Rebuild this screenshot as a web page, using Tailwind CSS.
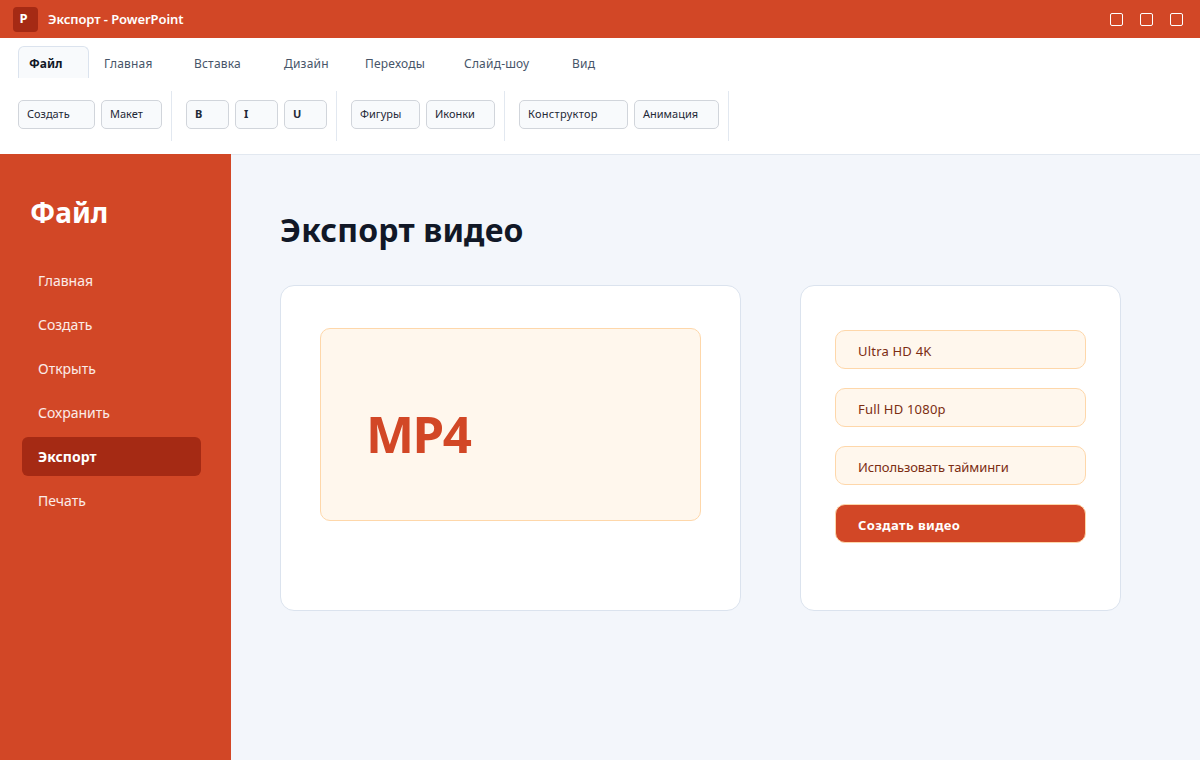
<!DOCTYPE html>
<html lang="ru">
<head>
<meta charset="utf-8">
<script src="https://cdn.jsdelivr.net/npm/@tailwindcss/browser@4"></script>
</head>
<body class="m-0 h-[760px] w-[1200px] overflow-hidden font-['Noto_Sans',sans-serif] bg-[#f3f6fb]">
<div class="flex h-[38px] items-center justify-between bg-[#d24726] pl-[13px] pr-[17px]">
  <div class="flex items-center gap-[10px]">
    <div class="flex h-[25px] w-[25px] items-center justify-center rounded-[4px] bg-[#a52a14] pb-[1px] pr-[4px] text-[13px] font-bold text-white">P</div>
    <span class="pt-[1px] text-[13px] font-semibold tracking-[-0.08px] text-white">Экспорт - PowerPoint</span>
  </div>
  <div class="flex gap-[17px]">
    <div class="h-[13px] w-[13px] rounded-[2px] border border-white"></div>
    <div class="h-[13px] w-[13px] rounded-[2px] border border-white"></div>
    <div class="h-[13px] w-[13px] rounded-[2px] border border-white"></div>
  </div>
</div>
<div class="h-[116px] bg-white px-[18px] pt-[8px]">
  <div class="flex h-[32px] text-[12px] tracking-[0.2px] text-[#475569]">
    <div class="flex w-[71px] items-center rounded-t-[6px] border border-b-0 border-[#dbe3ee] bg-[#f8fafc] pl-[10px] pt-[3px] font-bold tracking-normal text-[#111827]">Файл</div>
    <div class="ml-[15px] flex w-[90px] items-center pt-[3px]">Главная</div>
    <div class="flex w-[90px] items-center pt-[3px]">Вставка</div>
    <div class="flex w-[81px] items-center pt-[3px]">Дизайн</div>
    <div class="flex w-[99px] items-center pt-[3px]">Переходы</div>
    <div class="flex w-[108px] items-center pt-[3px]">Слайд-шоу</div>
    <div class="flex items-center pt-[3px]">Вид</div>
  </div>
  <div class="mt-[13px] flex h-[50px] items-start text-[11px] text-[#1f2937]">
    <div class="flex h-[50px] items-start gap-[6px] border-r border-[#e2e8f0] pr-[9px] pt-[9px]">
      <div class="flex h-[29px] w-[77px] items-center rounded-[5px] border border-[#d1d5db] bg-[#f8fafc] pl-[8px]">Создать</div>
      <div class="flex h-[29px] w-[61px] items-center rounded-[5px] border border-[#d1d5db] bg-[#f8fafc] pl-[8px]">Макет</div>
    </div>
    <div class="ml-[14px] flex h-[50px] items-start gap-[6px] border-r border-[#e2e8f0] pr-[9px] pt-[9px]">
      <div class="flex h-[29px] w-[43px] items-center rounded-[5px] border border-[#d1d5db] bg-[#f8fafc] pl-[8px] font-bold">B</div>
      <div class="flex h-[29px] w-[43px] items-center rounded-[5px] border border-[#d1d5db] bg-[#f8fafc] pl-[8px] font-bold">I</div>
      <div class="flex h-[29px] w-[43px] items-center rounded-[5px] border border-[#d1d5db] bg-[#f8fafc] pl-[8px] font-bold">U</div>
    </div>
    <div class="ml-[14px] flex h-[50px] items-start gap-[6px] border-r border-[#e2e8f0] pr-[9px] pt-[9px]">
      <div class="flex h-[29px] w-[69px] items-center rounded-[5px] border border-[#d1d5db] bg-[#f8fafc] pl-[8px]">Фигуры</div>
      <div class="flex h-[29px] w-[69px] items-center rounded-[5px] border border-[#d1d5db] bg-[#f8fafc] pl-[8px]">Иконки</div>
    </div>
    <div class="ml-[14px] flex h-[50px] items-start gap-[6px] border-r border-[#e2e8f0] pr-[9px] pt-[9px]">
      <div class="flex h-[29px] w-[109px] items-center rounded-[5px] border border-[#d1d5db] bg-[#f8fafc] pl-[8px] tracking-[0.3px]">Конструктор</div>
      <div class="flex h-[29px] w-[85px] items-center rounded-[5px] border border-[#d1d5db] bg-[#f8fafc] pl-[8px]">Анимация</div>
    </div>
  </div>
</div>
<div class="flex h-[606px]">
  <aside class="w-[231px] bg-[#d24726] pl-[22px] pt-[39px]">
    <div class="pl-[8px] text-[28px] font-bold leading-[38px] text-white">Файл</div>
    <nav class="mt-[30px] flex w-[179px] flex-col gap-[5px] text-[14px] text-white/90">
      <div class="flex h-[39px] items-center pl-[16px]">Главная</div>
      <div class="flex h-[39px] items-center pl-[16px]">Создать</div>
      <div class="flex h-[39px] items-center pl-[16px]">Открыть</div>
      <div class="flex h-[39px] items-center pl-[16px]">Сохранить</div>
      <div class="flex h-[39px] items-center rounded-[6px] bg-[#a52a14] pl-[16px] font-bold text-white">Экспорт</div>
      <div class="flex h-[39px] items-center pl-[16px]">Печать</div>
    </nav>
  </aside>
  <main class="flex-1 border-t border-[#e2e8f0] pl-[49px] pt-[53px]">
    <h1 class="text-[32px] font-bold leading-[44px] tracking-[0.15px] text-[#111827]">Экспорт видео</h1>
    <div class="mt-[33px] flex items-start gap-[59px]">
      <section class="h-[326px] w-[461px] rounded-[14px] border border-[#dbe3ee] bg-white pl-[39px] pt-[42px]">
        <div class="flex h-[193px] w-[381px] items-center rounded-[10px] border border-[#fed7aa] bg-[#fff7ed] pl-[45px] pt-[18px] text-[51px] font-bold tracking-[-1.5px] text-[#d24726]">MP4</div>
      </section>
      <section class="flex h-[326px] w-[321px] flex-col gap-[19px] rounded-[14px] border border-[#dbe3ee] bg-white pl-[34px] pt-[44px] text-[13px] text-[#7c2d12]">
        <div class="flex h-[39px] w-[251px] items-center rounded-[10px] border border-[#fed7aa] bg-[#fff7ed] pl-[22px] pt-[5px] tracking-[0.2px]">Ultra HD 4K</div>
        <div class="flex h-[39px] w-[251px] items-center rounded-[10px] border border-[#fed7aa] bg-[#fff7ed] pl-[22px] pt-[5px] tracking-[0.2px]">Full HD 1080p</div>
        <div class="flex h-[39px] w-[251px] items-center rounded-[10px] border border-[#fed7aa] bg-[#fff7ed] pl-[22px] pt-[5px] tracking-[-0.1px]">Использовать тайминги</div>
        <div class="flex h-[39px] w-[251px] items-center rounded-[10px] border border-[#fed7aa] bg-[#d24726] pl-[22px] pt-[5px] font-bold tracking-[0.4px] text-white">Создать видео</div>
      </section>
    </div>
  </main>
</div>
</body>
</html>
